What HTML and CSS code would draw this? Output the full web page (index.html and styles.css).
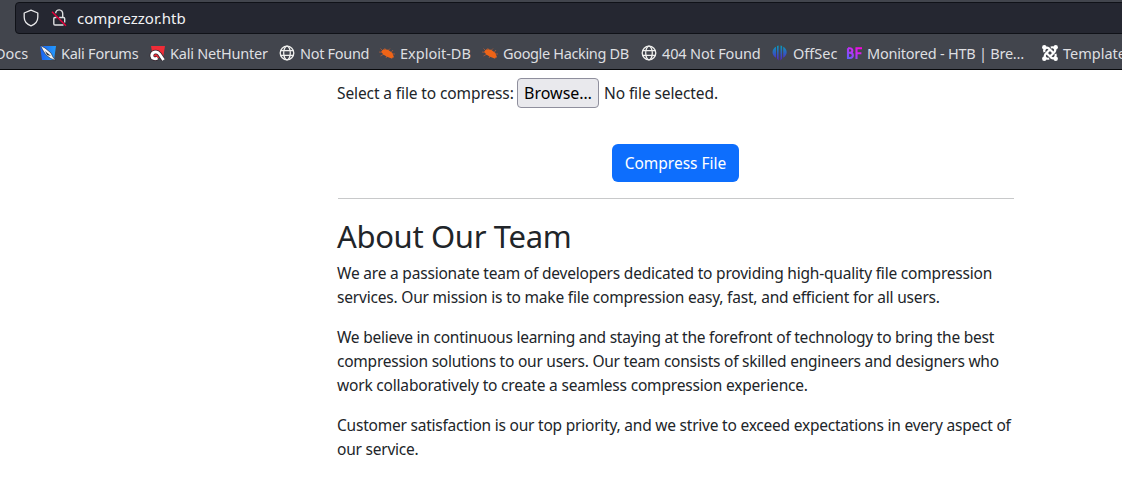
FILE: index.html
```
<!DOCTYPE html>
<html lang="en">
<head>
<meta charset="utf-8">
<title>Comprezzor</title>
<link rel="stylesheet" href="styles.css">
</head>
<body>
<svg class="defs" width="0" height="0">
  <defs>
    <linearGradient id="forum" x2="1"><stop stop-color="#1a60ef"/><stop offset="1" stop-color="#239cff"/></linearGradient>
    <linearGradient id="offsec" x2="0" y2="1"><stop stop-color="#079dba"/><stop offset="1" stop-color="#5720c8"/></linearGradient>
    <linearGradient id="bf" x1="0" y1="1" x2="1" y2="0"><stop stop-color="#5a64ff"/><stop offset=".55" stop-color="#c32df5"/><stop offset="1" stop-color="#ff00dc"/></linearGradient>
    <symbol id="globe" viewBox="0 0 16 16"><g fill="none" stroke="#eeeeec" stroke-width="1.3"><circle cx="8" cy="8" r="6.8"/><ellipse cx="8" cy="8" rx="3.3" ry="6.8"/><path d="M1.5 5.7h13M1.5 10.3h13"/></g></symbol>
    <symbol id="bug" viewBox="0 0 16 16"><g fill="none" stroke="#a5573a" stroke-width=".9"><path d="M4 6 1.500 3.500M4 7.500 0 7M5 9 1.500 11M7 5 5.500 3M9 5.500 11 3.500M12 7.500l2-2.500M8 11l-1 2M12 12l1 2M13 9l3 0"/></g><path fill="#ee6417" d="M2.200 6.500 4.500 4.200 9 4.700l4.200 3L15 12.300l-3 .9-4-1.400L4.200 9.500Z"/></symbol>
  </defs>
</svg>
<header class="chrome">
  <div class="address">
    <svg class="shield" viewBox="0 0 16 18"><path d="M8 1.200 14.800 4v4.200c0 4-2.600 7-6.800 8.700C3.800 15.200 1.200 12.200 1.200 8.200V4Z" fill="none" stroke="#e8e8ea" stroke-width="1.300" stroke-linejoin="round"/></svg>
    <svg class="lock" viewBox="0 0 16 18"><g fill="none" stroke="#dededf" stroke-width="1.400"><path d="M4.700 4.200a3.500 3.500 0 0 1 7 .3V8.500"/><path d="M8.200 8.500h4.300a1.200 1.200 0 0 1 1.200 1.200v3.800M12.500 16H4a1.200 1.200 0 0 1-1.200-1.200V9.700A1.200 1.200 0 0 1 4 8.500h1.500"/></g><path d="M1 2.700 15 16.700" stroke="#e4003a" stroke-width="1.500"/></svg>
    <span class="url">comprezzor.htb</span>
  </div>
  <nav class="bookmarks">
    <a class="bm docs"><span>Docs</span></a>
    <a class="bm forums"><svg viewBox="0 0 16 16"><path fill="url(#forum)" d="M0 1h16l-2 14H2Z"/><path fill="#f4f5f7" stroke="#20252e" stroke-width=".6" d="M.3.500 5 3l6 5 2 4 2.700 3.500-5-2L6 10 4 7 2.500 4.500Z"/><path fill="#303640" d="m5 6 6 5-4-1Z"/></svg><span>Kali Forums</span></a>
    <a class="bm hunter"><svg viewBox="0 0 16 16"><path fill="#ef2c37" d="M2 1h14l-2 12H4Z"/><path fill="none" stroke="#35252e" stroke-width="4.400" d="M14 14.500 10.500 9C7.500 5 2.500 7.500 2.800 11c.3 2.500 3 3.500 5.700 2"/><path fill="none" stroke="#fff" stroke-width="2.900" d="M14.500 15 10.500 9C7.500 5 2.500 7.500 2.800 11c.3 2.500 3 3.500 5.700 2"/></svg><span>Kali NetHunter</span></a>
    <a class="bm missing"><svg><use href="#globe"/></svg><span>Not Found</span></a>
    <a class="bm exploit"><svg><use href="#bug"/></svg><span>Exploit-DB</span></a>
    <a class="bm hacking"><svg><use href="#bug"/></svg><span>Google Hacking DB</span></a>
    <a class="bm missing404"><svg><use href="#globe"/></svg><span>404 Not Found</span></a>
    <a class="bm offsec"><svg viewBox="0 0 16 16"><path fill="url(#offsec)" d="M5 1 6.600.5v15L5 13.500ZM8.500.5l1.600.5v12.500l-1.600 2ZM4 1.800v11C1.700 11.500.5 9.500.5 7.300S1.700 3 4 1.800ZM11.200 1.800v11c2.300-1.300 3.500-3.300 3.500-5.500S13.500 3 11.200 1.800Z"/></svg><span>OffSec</span></a>
    <a class="bm monitored"><svg viewBox="0 0 16 16"><path fill="none" stroke="url(#bf)" stroke-width="2.100" d="M2 3.200h1.700c3.500 0 3.500 4.500 0 4.500H2h2c3.800 0 3.800 5.300 0 5.300H2V3.200M10.500 14.100V3.200H16M10.500 8.300h4.900"/></svg><span>Monitored - HTB | Bre…</span></a>
    <a class="bm template"><svg viewBox="0 0 16 16"><g fill="none" stroke="#fff" stroke-width="2.200"><path d="M2.500 7.200C1.500 4 4 1.500 7 3.500l5 5M8.800 2.500C12 1.500 14.500 4 12.500 7l-5 5M13.500 8.800C14.500 12 12 14.500 9 12.500l-5-5M7.200 13.500C4 14.500 1.500 12 3.500 9l5-5"/></g><g fill="#fff"><circle cx="2.300" cy="2.300" r="2.200"/><circle cx="13.700" cy="2.300" r="2.200"/><circle cx="2.300" cy="13.700" r="2.200"/><circle cx="13.700" cy="13.700" r="2.200"/></g></svg><span>Templates</span></a>
  </nav>
</header>
<main class="content">
  <div class="picker"><span class="label">Select a file to compress:</span><button class="browse">Browse…</button><span class="status">No file selected.</span></div>
  <button class="submit">Compress File</button>
  <hr>
  <h2>About Our Team</h2>
  <p><span class="l1">We are a passionate team of developers dedicated to providing high-quality file compression</span><br><span class="l2">services. Our mission is to make file compression easy, fast, and efficient for all users.</span></p>
  <p><span class="l3">We believe in continuous learning and staying at the forefront of technology to bring the best</span><br><span class="l4">compression solutions to our users. Our team consists of skilled engineers and designers who</span><br><span class="l5">work collaboratively to create a seamless compression experience.</span></p>
  <p><span class="l6">Customer satisfaction is our top priority, and we strive to exceed expectations in every aspect of</span><br><span class="l7">our service.</span></p>
</main>
</body>
</html>
```
FILE: styles.css
```
* { box-sizing: border-box; }
body { margin: 0; background: #fff; color: #212529; font: 15.500px/24px "Noto Sans", sans-serif; overflow: hidden; }
.defs { display: block; }
.chrome { height: 70px; background: #42454d; border-bottom: 1px solid #08090c; padding-top: 2px; color: #dedfe1; overflow: hidden; }
.address { height: 32px; margin-left: 15px; margin-right: -5px; background: #252731; border: 1px solid #101218; border-radius: 4px; display: flex; align-items: center; }
.shield { width: 16px; height: 18px; margin-left: 7px; }
.lock { width: 16px; height: 18px; margin-left: 12px; }
.url { margin-left: 10px; font-size: 15px; color: #f2f2f4; white-space: nowrap; }
.bookmarks { display: grid; grid-template-columns: 41px 109px 130px 100px 103px 159px 131px 74px 196px 110px; height: 34px; padding-top: 2px; font-size: 14.500px; line-height: 34px; }
.bm { display: flex; align-items: center; gap: 5px; white-space: nowrap; height: 34px; margin-left: -1px; }
.bm svg { width: 16px; height: 16px; flex: none; }
.docs span { margin-left: -4px; }
.forums span { letter-spacing: -.25px; }
.hunter span { letter-spacing: -.22px; }
.missing span { letter-spacing: -.3px; }
.hacking span { letter-spacing: -.35px; }
.missing404 span { letter-spacing: -.15px; }
.monitored span { letter-spacing: -.23px; }
.content { width: 676px; margin-left: 338px; padding-top: 8px; white-space: nowrap; letter-spacing: -.22px; }
.picker { display: flex; align-items: center; height: 30px; }
.label { width: 175px; margin-left: -1px; letter-spacing: -.11px; }
button { font: inherit; white-space: nowrap; letter-spacing: 0; }
.browse { width: 82px; height: 30px; margin-left: 5px; padding: 0; border: 1px solid #8f8f9d; border-radius: 4px; background: #e9e9ed; color: #000; font-size: 16px; }
.status { margin-left: 5px; letter-spacing: -.1px; }
.submit { display: block; width: 127px; height: 38px; margin: 36px 0 0 274px; padding: 0; border: 0; border-radius: 6px; background: #0d6efd; color: #fff; }
hr { height: 1px; margin: 16px 0; border: 0; background: #c8c9ca; }
h2 { margin: 0 0 8px -1px; padding-top: 1.500px; height: 38.400px; font-size: 31px; line-height: 38.400px; font-weight: 400; letter-spacing: -.34px; }
p { margin: 0 0 16px -1px; }
.l1, .l2 { letter-spacing: -.2px; }
.l3, .l4 { letter-spacing: -.24px; }
.l5 { letter-spacing: -.19px; }
```
